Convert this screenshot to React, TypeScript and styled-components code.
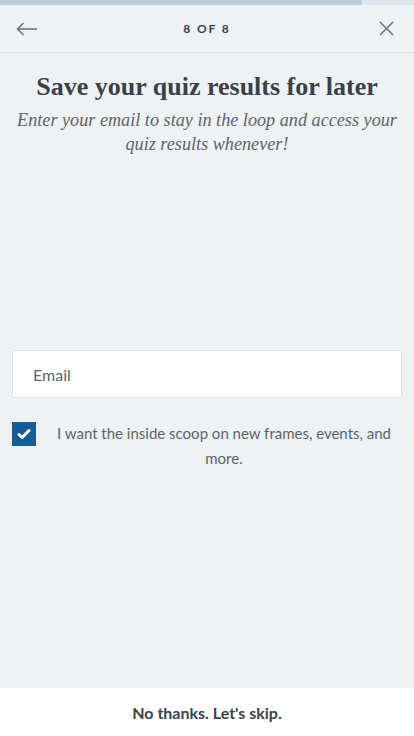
import React from "react";
import styled, { createGlobalStyle } from "styled-components";

const Global = createGlobalStyle`
  html, body { margin: 0; padding: 0; background: #eef2f5; }
  * { box-sizing: border-box; }
`;

const Page = styled.div`
  width: 414px;
  height: 736px;
  display: flex;
  flex-direction: column;
  background: #eef2f5;
  font-family: Lato, "Liberation Sans", sans-serif;
  color: #3b4148;
`;

const Progress = styled.div`
  height: 5px;
  background: #dfe6ec;
  display: flex;
`;

const ProgressFill = styled.div`
  height: 100%;
  background: #b8cfd9;
`;

const Header = styled.header`
  height: 48px;
  display: flex;
  align-items: center;
  justify-content: space-between;
  padding: 0 14px 0 14px;
  border-bottom: 1px solid #d5dce2;
`;

const IconButton = styled.button`
  width: 26px;
  height: 26px;
  border: 0;
  padding: 0;
  background: transparent;
  display: flex;
  align-items: center;
  justify-content: center;
  color: #6b7077;
`;

const StepLabel = styled.div`
  font-size: 12px;
  font-weight: 700;
  letter-spacing: 1.9px;
  color: #3b4148;
`;

const Intro = styled.section`
  display: flex;
  flex-direction: column;
  align-items: center;
  padding: 20px 6px 0;
  text-align: center;
`;

const Title = styled.h1`
  margin: 0;
  font-family: "Liberation Serif", serif;
  font-weight: 700;
  font-size: 26px;
  line-height: 28px;
  color: #3b4148;
`;

const Subtitle = styled.p`
  margin: 7px 0 0;
  font-family: "Liberation Serif", serif;
  font-style: italic;
  font-size: 18.2px;
  line-height: 24px;
  color: #5d636a;
`;

const Form = styled.form`
  margin-top: 194px;
  padding: 0 12px;
  display: flex;
  flex-direction: column;
`;

const EmailInput = styled.input`
  height: 48px;
  width: 100%;
  border: 1px solid #dde3e8;
  border-radius: 2px;
  background: #fff;
  padding: 0 20px;
  font-family: Lato, "Liberation Sans", sans-serif;
  font-size: 16px;
  color: #3b4148;
  outline: none;
  &::placeholder { color: #5d636a; }
`;

const ConsentRow = styled.label`
  margin-top: 24px;
  padding-right: 10px;
  display: flex;
  align-items: flex-start;
  gap: 20px;
`;

const CheckBox = styled.span`
  flex: 0 0 24px;
  width: 24px;
  height: 24px;
  background: #155d92;
  display: flex;
  align-items: center;
  justify-content: center;
`;

const ConsentText = styled.span`
  flex: 1;
  margin-top: -1px;
  font-size: 15px;
  line-height: 25px;
  text-align: center;
  color: #5d636a;
`;

const Spacer = styled.div`
  flex: 1;
`;

const Footer = styled.footer`
  height: 48px;
  background: #fff;
  display: flex;
  align-items: center;
  justify-content: center;
`;

const SkipButton = styled.button`
  border: 0;
  background: transparent;
  font-family: Lato, "Liberation Sans", sans-serif;
  font-weight: 700;
  font-size: 16px;
  color: #3b4148;
  padding: 0;
`;

export default function App() {
  return (
    <>
      <Global />
      <Page>
        <Progress>
          <ProgressFill style={{ width: `${(362 / 414) * 100}%` }} />
        </Progress>
        <Header>
          <IconButton aria-label="Back">
            <svg width="22" height="14" viewBox="0 0 22 14" fill="none" stroke="currentColor" strokeWidth="1.5">
              <path d="M21 7H1.5M7.5 1L1.5 7l6 6" />
            </svg>
          </IconButton>
          <StepLabel>8 OF 8</StepLabel>
          <IconButton aria-label="Close">
            <svg width="15" height="15" viewBox="0 0 15 15" fill="none" stroke="currentColor" strokeWidth="1.5">
              <path d="M1 1l13 13M14 1L1 14" />
            </svg>
          </IconButton>
        </Header>
        <Intro>
          <Title>Save your quiz results for later</Title>
          <Subtitle>
            Enter your email to stay in the loop and access your
            <br />
            quiz results whenever!
          </Subtitle>
        </Intro>
        <Form onSubmit={(e) => e.preventDefault()}>
          <EmailInput type="email" placeholder="Email" />
          <ConsentRow>
            <CheckBox>
              <svg width="14" height="12" viewBox="0 0 14 12" fill="none" stroke="#fff" strokeWidth="3" strokeLinecap="round" strokeLinejoin="round">
                <path d="M2 6.5l3.2 3L12 2.5" />
              </svg>
            </CheckBox>
            <ConsentText>I want the inside scoop on new frames, events, and more.</ConsentText>
          </ConsentRow>
        </Form>
        <Spacer />
        <Footer>
          <SkipButton type="button">No thanks. Let's skip.</SkipButton>
        </Footer>
      </Page>
    </>
  );
}
